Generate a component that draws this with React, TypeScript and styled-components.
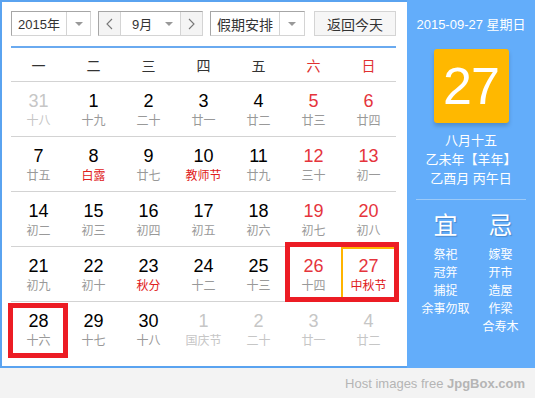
import React from 'react'
import styled, { createGlobalStyle } from 'styled-components'

const GlobalStyle = createGlobalStyle`
    * { box-sizing: border-box; }
    body {
        margin: 0;
        background: #fff;
        font-family: "Liberation Sans", "Noto Sans CJK SC", sans-serif;
    }
`

type Day = {
    n: number,
    lunar: string,
    other?: boolean,
    weekend?: boolean,
    fest?: boolean,
    selected?: boolean,
}

const weeks: Day[][] = [
    [
        { n: 31, lunar: '十八', other: true },
        { n: 1, lunar: '十九' },
        { n: 2, lunar: '二十' },
        { n: 3, lunar: '廿一' },
        { n: 4, lunar: '廿二' },
        { n: 5, lunar: '廿三', weekend: true },
        { n: 6, lunar: '廿四', weekend: true },
    ],
    [
        { n: 7, lunar: '廿五' },
        { n: 8, lunar: '白露', fest: true },
        { n: 9, lunar: '廿七' },
        { n: 10, lunar: '教师节', fest: true },
        { n: 11, lunar: '廿九' },
        { n: 12, lunar: '三十', weekend: true },
        { n: 13, lunar: '初一', weekend: true },
    ],
    [
        { n: 14, lunar: '初二' },
        { n: 15, lunar: '初三' },
        { n: 16, lunar: '初四' },
        { n: 17, lunar: '初五' },
        { n: 18, lunar: '初六' },
        { n: 19, lunar: '初七', weekend: true },
        { n: 20, lunar: '初八', weekend: true },
    ],
    [
        { n: 21, lunar: '初九' },
        { n: 22, lunar: '初十' },
        { n: 23, lunar: '秋分', fest: true },
        { n: 24, lunar: '十二' },
        { n: 25, lunar: '十三' },
        { n: 26, lunar: '十四', weekend: true },
        { n: 27, lunar: '中秋节', weekend: true, fest: true, selected: true },
    ],
    [
        { n: 28, lunar: '十六' },
        { n: 29, lunar: '十七' },
        { n: 30, lunar: '十八' },
        { n: 1, lunar: '国庆节', other: true },
        { n: 2, lunar: '二十', other: true },
        { n: 3, lunar: '廿一', other: true },
        { n: 4, lunar: '廿二', other: true },
    ],
]

const weekdays = ['一', '二', '三', '四', '五', '六', '日']
const goodList = ['祭祀', '冠笄', '捕捉', '余事勿取']
const badList = ['嫁娶', '开市', '造屋', '作梁', '合寿木']

const Chevron = ({ dir }: { dir: 'left' | 'right' }) => (
    <svg width='7' height='12' viewBox='0 0 7 12'>
        <polyline
            points={dir === 'left' ? '6,1 1,6 6,11' : '1,1 6,6 1,11'}
            fill='none'
            stroke='#777'
            strokeWidth='1.1'
        />
    </svg>
)

export default function App() {
    return (
        <Page>
            <GlobalStyle />
            <Frame>
                <Main>
                    <Toolbar>
                        <Select $width={80} $gap={7}>
                            <SelectText>2015年</SelectText>
                            <ArrowBox><Caret /></ArrowBox>
                        </Select>
                        <Select $width={105} $gap={7}>
                            <NavButton $side='left'><Chevron dir='left' /></NavButton>
                            <MonthText>
                                <span>9月</span>
                                <Caret />
                            </MonthText>
                            <NavButton $side='right'><Chevron dir='right' /></NavButton>
                        </Select>
                        <Select $width={95} $gap={9}>
                            <SelectText $size={14}>假期安排</SelectText>
                            <ArrowBox $width={25}><Caret /></ArrowBox>
                        </Select>
                        <TodayButton>返回今天</TodayButton>
                    </Toolbar>
                    <BlueRule />
                    <WeekHeader>
                        {weekdays.map((w, i) => (
                            <WeekName key={w} $red={i > 4}>{w}</WeekName>
                        ))}
                    </WeekHeader>
                    {weeks.map((week, wi) => (
                        <WeekRow key={wi}>
                            {week.map((d, di) => (
                                <Cell key={di} $selected={d.selected}>
                                    <DayNum $other={d.other} $red={d.weekend}>{d.n}</DayNum>
                                    <Lunar $other={d.other} $fest={d.fest}>{d.lunar}</Lunar>
                                </Cell>
                            ))}
                        </WeekRow>
                    ))}
                    <Mark $left={6} $top={301} $w={60} $h={55} />
                    <Mark $left={283} $top={240} $w={114} $h={60} />
                </Main>
                <Side>
                    <DateLine>2015-09-27 星期日</DateLine>
                    <BigDay>27</BigDay>
                    <LunarInfo>
                        <div>八月十五</div>
                        <div>乙未年【羊年】</div>
                        <div>乙酉月 丙午日</div>
                    </LunarInfo>
                    <SideRule />
                    <Almanac>
                        <AlmanacCol>
                            <AlmanacTitle>宜</AlmanacTitle>
                            {goodList.map(t => <AlmanacItem key={t}>{t}</AlmanacItem>)}
                        </AlmanacCol>
                        <AlmanacCol>
                            <AlmanacTitle>忌</AlmanacTitle>
                            {badList.map(t => <AlmanacItem key={t}>{t}</AlmanacItem>)}
                        </AlmanacCol>
                    </Almanac>
                </Side>
            </Frame>
            <Footer>
                Host images free&nbsp;<b>JpgBox.com</b>
            </Footer>
        </Page>
    )
}

const Page = styled.div`
    width: 535px;
    height: 398px;
    background: #f3f3f3;
`

const Frame = styled.div`
    display: flex;
    height: 368px;
`

const Main = styled.div`
    position: relative;
    width: 407px;
    height: 368px;
    background: #fff;
    border: 2px solid #5aa3f0;
    border-right: none;
    padding: 9px 0 0 9px;
`

const Toolbar = styled.div`
    display: flex;
    height: 25px;
    font-size: 13px;
    color: #333;
`

const Select = styled.div<{ $width: number, $gap: number }>`
    display: flex;
    width: ${p => p.$width}px;
    margin-right: ${p => p.$gap}px;
    border: 1px solid;
    border-color: #a6a6a6 #d4d4d4 #d4d4d4 #a6a6a6;
    background: #fff;
`

const SelectText = styled.div<{ $size?: number }>`
    flex: 1;
    display: flex;
    align-items: center;
    justify-content: center;
    font-size: ${p => p.$size || 13}px;
`

const ArrowBox = styled.div<{ $width?: number }>`
    width: ${p => p.$width || 24}px;
    display: flex;
    align-items: center;
    justify-content: center;
    border-left: 1px solid #d4d4d4;
`

const Caret = styled.span`
    width: 0;
    height: 0;
    border-left: 4px solid transparent;
    border-right: 4px solid transparent;
    border-top: 4px solid #999;
`

const NavButton = styled.div<{ $side: 'left' | 'right' }>`
    width: 22px;
    display: flex;
    align-items: center;
    justify-content: center;
    background: #f4f4f4;
    ${p => p.$side === 'left' ? 'border-right' : 'border-left'}: 1px solid #d4d4d4;
`

const MonthText = styled.div`
    flex: 1;
    display: flex;
    align-items: center;
    justify-content: space-between;
    padding: 0 7px 0 11px;
    font-size: 13px;
`

const TodayButton = styled.div`
    width: 82px;
    display: flex;
    align-items: center;
    justify-content: center;
    border: 1px solid #d4d4d4;
    background: #f6f6f6;
    font-size: 14px;
`

const BlueRule = styled.div`
    width: 385px;
    height: 2px;
    margin-top: 10px;
    background: #6aaaf0;
`

const WeekHeader = styled.div`
    display: grid;
    grid-template-columns: repeat(7, 55px);
    height: 33px;
    align-items: center;
    font-size: 14px;
`

const WeekName = styled.div<{ $red?: boolean }>`
    text-align: center;
    color: ${p => p.$red ? '#e03030' : '#333'};
`

const WeekRow = styled.div`
    display: grid;
    grid-template-columns: repeat(7, 55px);
    border-top: 1px solid #d3d3d3;
    width: 385px;
`

const Cell = styled.div<{ $selected?: boolean }>`
    height: 54px;
    padding-top: 8px;
    text-align: center;
    box-shadow: ${p => p.$selected ? 'inset 0 0 0 2px #ffb400' : 'none'};
`

const DayNum = styled.div<{ $other?: boolean, $red?: boolean }>`
    font-size: 18px;
    line-height: 22px;
    color: ${p => p.$other ? '#c6c6c6' : p.$red ? '#e5343c' : '#000'};
`

const Lunar = styled.div<{ $other?: boolean, $fest?: boolean }>`
    font-size: 12px;
    line-height: 18px;
    color: ${p => p.$other ? '#c6c6c6' : p.$fest ? '#e02020' : '#999'};
`

const Mark = styled.div<{ $left: number, $top: number, $w: number, $h: number }>`
    position: absolute;
    left: ${p => p.$left}px;
    top: ${p => p.$top}px;
    width: ${p => p.$w}px;
    height: ${p => p.$h}px;
    border: 5px solid #ec1c24;
`

const Side = styled.div`
    width: 128px;
    height: 368px;
    background: #63adfa;
    color: #fff;
    display: flex;
    flex-direction: column;
    align-items: center;
    padding-top: 16px;
`

const DateLine = styled.div`
    font-size: 13px;
    line-height: 18px;
`

const BigDay = styled.div`
    margin-top: 15px;
    width: 75px;
    height: 74px;
    border-radius: 3px;
    background: #ffb800;
    box-shadow: 0 3px 4px rgba(0, 0, 0, 0.18);
    display: flex;
    align-items: center;
    justify-content: center;
    font-size: 52px;
    letter-spacing: -1px;
`

const LunarInfo = styled.div`
    margin-top: 8px;
    font-size: 13px;
    line-height: 19px;
    text-align: center;
`

const SideRule = styled.div`
    width: 110px;
    height: 1px;
    margin-top: 11px;
    background: #9ccaf8;
`

const Almanac = styled.div`
    display: grid;
    grid-template-columns: 55px 55px;
    align-self: flex-start;
    margin-left: 11px;
    margin-top: 12px;
`

const AlmanacCol = styled.div`
    display: flex;
    flex-direction: column;
    align-items: center;
`

const AlmanacTitle = styled.div`
    font-size: 24px;
    line-height: 28px;
    margin-bottom: 6px;
    text-shadow: 1px 1px 1px rgba(40, 90, 150, 0.45);
`

const AlmanacItem = styled.div`
    font-size: 12px;
    line-height: 18px;
    white-space: nowrap;
`

const Footer = styled.div`
    height: 30px;
    display: flex;
    align-items: center;
    justify-content: flex-end;
    padding-right: 10px;
    font-size: 13px;
    color: #b5b5b5;
    b { font-weight: bold; }
`
